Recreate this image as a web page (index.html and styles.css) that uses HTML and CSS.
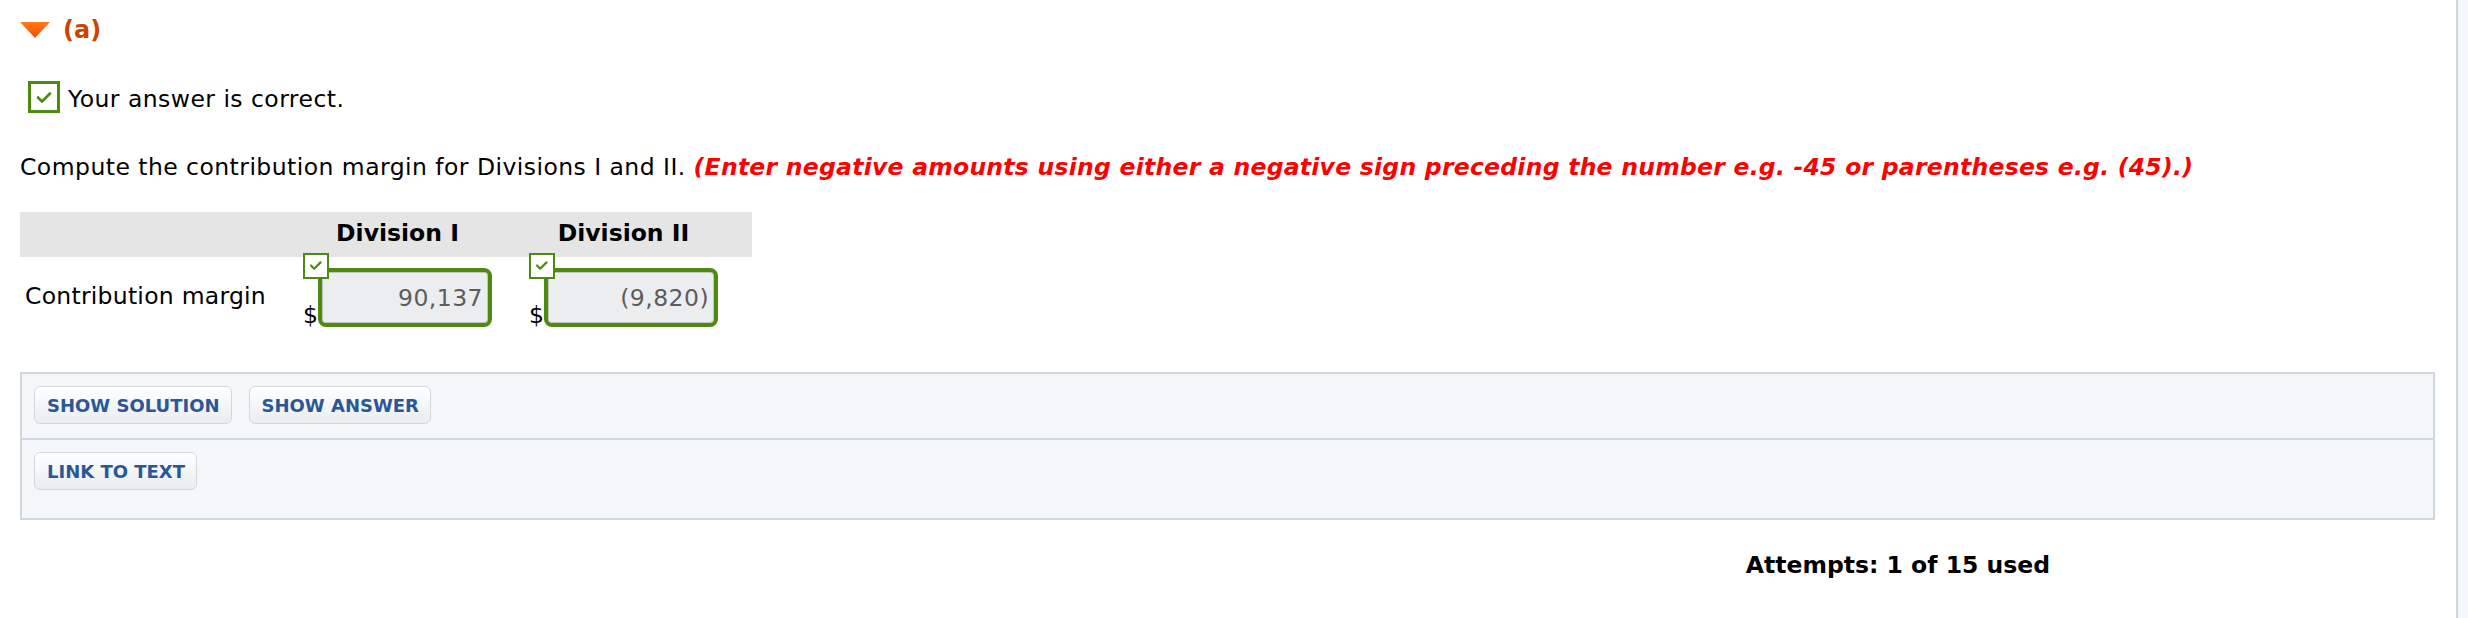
FILE: index.html
```html
<!DOCTYPE html>
<html lang="en">
<head>
<meta charset="utf-8">
<title>Part (a)</title>
<link rel="stylesheet" href="styles.css">
</head>
<body>
<div class="page">
  <main class="content">
    <div class="part-head">
      <svg class="caret" width="30" height="16" viewBox="0 0 30 16"><defs><linearGradient id="cg" x1="0" y1="0" x2="0" y2="1"><stop offset="0" stop-color="#ff7a1a"/><stop offset="1" stop-color="#f24e00"/></linearGradient></defs><path d="M0 0 H30 L15 16 Z" fill="url(#cg)"/></svg>
      <span class="part-label">(a)</span>
    </div>

    <div class="feedback">
      <span class="check check-big"><svg width="26" height="26" viewBox="0 0 26 26"><path d="M7 13.5 L11 17.5 L19 9.5" fill="none" stroke="#4f8a10" stroke-width="2.6" stroke-linecap="round" stroke-linejoin="round"/></svg></span>
      <span class="feedback-text">Your answer is correct.</span>
    </div>

    <p class="question">Compute the contribution margin for Divisions I and II. <em class="hint">(Enter negative amounts using either a negative sign preceding the number e.g. -45 or parentheses e.g. (45).)</em></p>

    <div class="grid-table">
      <div class="th"></div>
      <div class="th">Division I</div>
      <div class="th">Division II</div>

      <div class="td label">Contribution margin</div>
      <div class="td cell">
        <span class="dollar">$</span>
        <span class="field">
          <span class="check check-small"><svg width="22" height="22" viewBox="0 0 22 22"><path d="M6 10.5 L9.2 13.7 L15.5 7.4" fill="none" stroke="#4f8a10" stroke-width="2.2" stroke-linecap="round" stroke-linejoin="round"/></svg></span>
          <span class="value">90,137</span>
        </span>
      </div>
      <div class="td cell">
        <span class="dollar">$</span>
        <span class="field">
          <span class="check check-small"><svg width="22" height="22" viewBox="0 0 22 22"><path d="M6 10.5 L9.2 13.7 L15.5 7.4" fill="none" stroke="#4f8a10" stroke-width="2.2" stroke-linecap="round" stroke-linejoin="round"/></svg></span>
          <span class="value">(9,820)</span>
        </span>
      </div>
    </div>

    <div class="panel">
      <div class="panel-row">
        <button class="btn">SHOW SOLUTION</button>
        <button class="btn">SHOW ANSWER</button>
      </div>
      <div class="panel-row last">
        <button class="btn">LINK TO TEXT</button>
      </div>
    </div>

    <div class="attempts">Attempts: 1 of 15 used</div>
  </main>
  <aside class="rail"></aside>
</div>
</body>
</html>
```

FILE: styles.css
```css
* { box-sizing: border-box; }

html, body {
  margin: 0;
  padding: 0;
  background: #ffffff;
}

body {
  font-family: Verdana, "DejaVu Sans", sans-serif;
  font-size: 23.5px;
  line-height: 28px;
  letter-spacing: 0.45px;
  color: #000;
}

.page {
  display: flex;
  min-height: 618px;
}

.content {
  flex: 1;
  padding: 0 21px 0 20px;
}

.rail {
  width: 12px;
  border-left: 2px solid #cfd6e0;
  background: #f4f7fa;
}

/* part header */
.part-head {
  display: flex;
  align-items: center;
  gap: 13px;
  margin-top: 16px;
  height: 28px;
}

.caret { display: block; }

.part-label {
  font-weight: bold;
  font-size: 24px;
  letter-spacing: 0;
  color: #cc4400;
}

/* feedback */
.feedback {
  display: flex;
  align-items: flex-start;
  gap: 8px;
  margin-top: 37px;
  margin-left: 8px;
}

.check {
  display: flex;
  align-items: center;
  justify-content: center;
  background: #fff;
  border: 3px solid #4f8a10;
}

.check-big {
  width: 32px;
  height: 32px;
}

.feedback-text {
  margin-top: 4px;
}

/* question */
.question {
  margin: 40px 0 0;
}

.hint {
  color: #ff0000;
  font-weight: bold;
  font-style: italic;
  letter-spacing: 0.25px;
}

/* table */
.grid-table {
  display: grid;
  grid-template-columns: 280px 195px 257px;
  margin-top: 31px;
}

.th {
  background: #e5e5e5;
  font-weight: bold;
  letter-spacing: 0;
  text-align: center;
  padding: 7px 0 10px;
  height: 45px;
}

.td.label {
  padding: 25px 0 0 5px;
  letter-spacing: 0.25px;
}

.td.cell {
  display: flex;
  justify-content: center;
  align-items: flex-end;
  padding-top: 11px;
}

.dollar {
  line-height: 24px;
  width: 15px;
  letter-spacing: 0;
}

.field {
  position: relative;
  display: flex;
  align-items: center;
  justify-content: flex-end;
  width: 174px;
  height: 59px;
  border: 4px solid #4f8a10;
  border-radius: 8px;
  background: #ecedef;
  box-shadow: inset 0 0 0 1px #c4c4c4;
  padding-right: 5px;
  color: #5c5c5c;
}

.check-small {
  position: absolute;
  left: -19px;
  top: -19px;
  width: 26px;
  height: 26px;
  border-width: 2px;
}

/* panel */
.panel {
  margin-top: 45px;
  border: 2px solid #cfd6e0;
  background: #f4f7fa;
}

.panel-row {
  display: flex;
  gap: 17px;
  padding: 12px 12px 14px;
  border-bottom: 2px solid #cfd6e0;
}

.panel-row.last {
  border-bottom: none;
  padding-bottom: 28px;
}

.btn {
  height: 38px;
  padding: 0 11px 0 12px;
  font-family: Verdana, "DejaVu Sans", sans-serif;
  font-size: 18px;
  font-weight: bold;
  letter-spacing: 0;
  color: #2b5797;
  background: linear-gradient(#ffffff, #e9ecf0);
  border: 1px solid #d3d8df;
  border-radius: 6px;
  cursor: pointer;
}

/* attempts */
.attempts {
  margin-top: 31px;
  text-align: right;
  padding-right: 385px;
  font-weight: bold;
  letter-spacing: 0;
}
```
